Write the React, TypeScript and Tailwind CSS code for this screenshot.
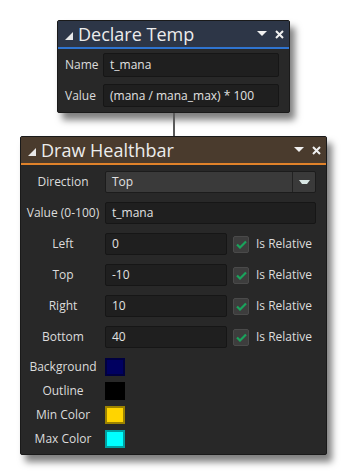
import React from 'react'

const font = "font-['Open_Sans',sans-serif]"

function HeaderIcons() {
  return (
    <div className="flex items-center gap-[8px] pr-[5px]">
      <svg width="10" height="6" viewBox="0 0 10 6">
        <polygon points="0,0 10,0 5,5" fill="#f0f0f0" />
      </svg>
      <svg width="9" height="9" viewBox="0 0 9 9">
        <path d="M1 1 L8 8 M8 1 L1 8" stroke="#f0f0f0" strokeWidth="2" />
      </svg>
    </div>
  )
}

function Header({ title, bg, line }: { title: string; bg: string; line: string }) {
  return (
    <>
      <div className={`flex items-center justify-between h-[26px] ${bg}`}>
        <div className="flex items-center">
          <svg width="8" height="8" viewBox="0 0 8 8" className="ml-[7px] mr-[5px] mt-[3px]">
            <polygon points="8,0 8,8 0,8" fill="#e8e8e8" />
          </svg>
          <span className="text-[18px] leading-none text-[#ececec]">{title}</span>
        </div>
        <HeaderIcons />
      </div>
      <div className={`h-[2px] ${line}`} />
    </>
  )
}

function Field({ value, className = '' }: { value: string; className?: string }) {
  return (
    <div
      className={`flex items-center bg-[#1f1f1f] border border-[#161616] rounded-[2px] px-[6px] text-[12px] text-[#e2e2e2] ${className}`}
    >
      {value}
    </div>
  )
}

function Check() {
  return (
    <div className="w-[16px] h-[17px] rounded-[2px] bg-[#3d3d3d] border border-[#4a4a4a] flex items-center justify-center">
      <svg width="11" height="9" viewBox="0 0 11 9">
        <path d="M1 4.5 L4 7.5 L10 1.5" stroke="#1aa35c" strokeWidth="2.2" fill="none" />
      </svg>
    </div>
  )
}

function Label({ text }: { text: string }) {
  return (
    <div className="w-[84px] text-center text-[12px] leading-[18px] text-[#dcdcdc] whitespace-nowrap">{text}</div>
  )
}

const coords = [
  { label: 'Left', value: '0' },
  { label: 'Top', value: '-10' },
  { label: 'Right', value: '10' },
  { label: 'Bottom', value: '40' },
]

const swatches = [
  { label: 'Background', cls: 'bg-[#000060] border-[#000040]' },
  { label: 'Outline', cls: 'bg-[#000000] border-[#000000]' },
  { label: 'Min Color', cls: 'bg-[#ffd400] border-[#9c8200]' },
  { label: 'Max Color', cls: 'bg-[#00ffff] border-[#00a0a0]' },
]

export default function App() {
  return (
    <div className={`w-[348px] h-[472px] bg-white overflow-hidden ${font}`}>
      {/* Declare Temp */}
      <div className="ml-[57px] mt-[20px] w-[233px] bg-[#282828] border border-[#1a1a1a] rounded-[2px] shadow-[5px_7px_7px_rgba(0,0,0,0.5)]">
        <Header title="Declare Temp" bg="bg-[#2d3647]" line="bg-[#2f74d0]" />
        <div className="pl-[7px] pr-[10px] pt-[4px] pb-[5px] flex flex-col gap-[7px]">
          <div className="flex items-center">
            <div className="w-[38px] text-[12px] text-[#dcdcdc]">Name</div>
            <Field value="t_mana" className="flex-1 h-[24px]" />
          </div>
          <div className="flex items-center">
            <div className="w-[38px] text-[12px] text-[#dcdcdc]">Value</div>
            <Field value="(mana / mana_max) * 100" className="flex-1 h-[23px]" />
          </div>
        </div>
      </div>

      {/* connector */}
      <div className="ml-[173px] w-[2px] h-[23px] bg-[#5a5a5a]" />

      {/* Draw Healthbar */}
      <div className="ml-[20px] w-[307px] bg-[#282828] border border-[#1a1a1a] rounded-[2px] shadow-[5px_7px_7px_rgba(0,0,0,0.5)]">
        <Header title="Draw Healthbar" bg="bg-[#4a3b2d]" line="bg-[#e0822a]" />
        <div className="pr-[10px] pt-[6px] pb-[6px]">
          <div className="flex flex-col gap-[9px]">
            <div className="flex items-center">
              <Label text="Direction" />
              <div className="flex-1 h-[22px] flex bg-[#3a3a3a] border border-[#1c1c1c] rounded-[2px]">
                <div className="flex-1 flex items-center px-[6px] text-[12px] text-[#e2e2e2]">Top</div>
                <div className="w-[23px] border-l border-[#222] flex items-center justify-center">
                  <svg width="11" height="5" viewBox="0 0 11 5">
                    <polygon points="0,0 11,0 8,4 3,4" fill="#d8e6e4" />
                  </svg>
                </div>
              </div>
            </div>
            <div className="flex items-center">
              <Label text="Value (0-100)" />
              <Field value="t_mana" className="flex-1 h-[22px]" />
            </div>
            {coords.map((c) => (
              <div key={c.label} className="flex items-center">
                <Label text={c.label} />
                <Field value={c.value} className="w-[122px] h-[22px]" />
                <div className="ml-[6px] mr-[7px]">
                  <Check />
                </div>
                <span className="text-[12px] text-[#dcdcdc] whitespace-nowrap">Is Relative</span>
              </div>
            ))}
          </div>
          <div className="flex flex-col gap-[6px] mt-[10px]">
            {swatches.map((s) => (
              <div key={s.label} className="flex items-center">
                <Label text={s.label} />
                <div className={`w-[20px] h-[18px] border-2 ${s.cls}`} />
              </div>
            ))}
          </div>
        </div>
      </div>
    </div>
  )
}
